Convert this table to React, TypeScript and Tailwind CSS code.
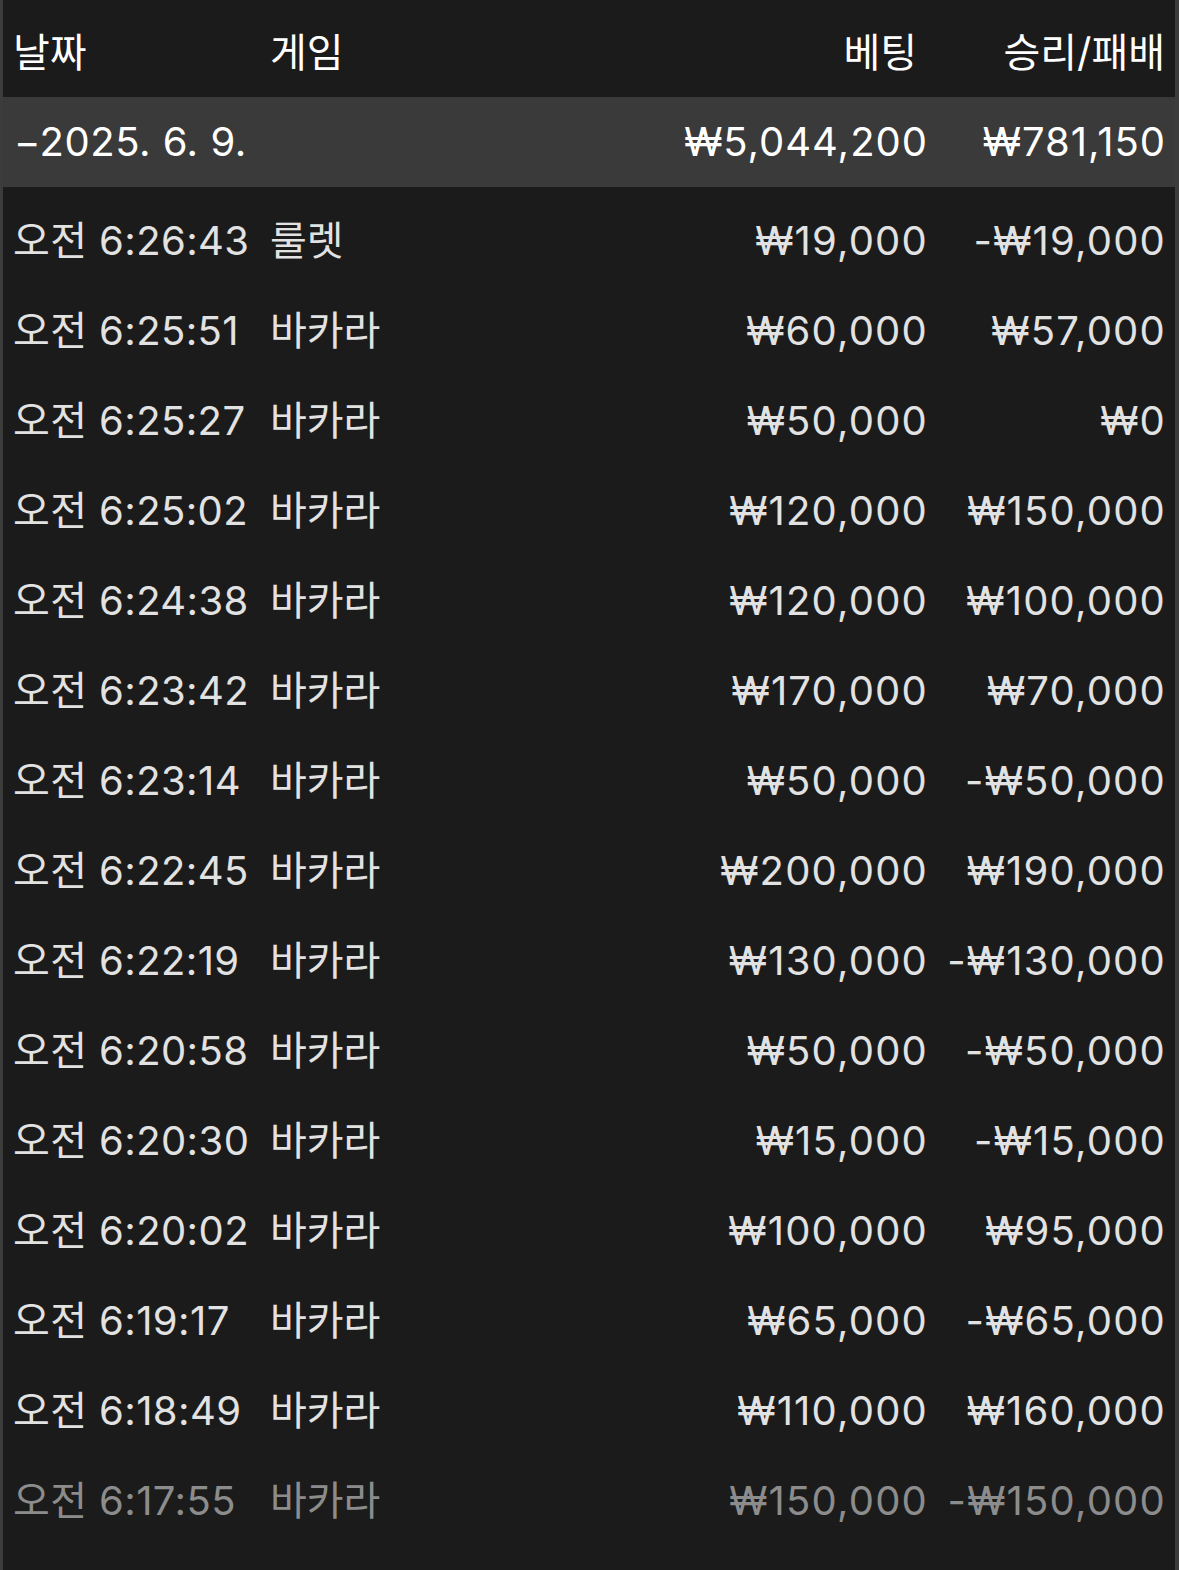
import React from "react";

const rows: [string, string, string, string][] = [
  ["오전 6:26:43", "룰렛", "₩19,000", "-₩19,000"],
  ["오전 6:25:51", "바카라", "₩60,000", "₩57,000"],
  ["오전 6:25:27", "바카라", "₩50,000", "₩0"],
  ["오전 6:25:02", "바카라", "₩120,000", "₩150,000"],
  ["오전 6:24:38", "바카라", "₩120,000", "₩100,000"],
  ["오전 6:23:42", "바카라", "₩170,000", "₩70,000"],
  ["오전 6:23:14", "바카라", "₩50,000", "-₩50,000"],
  ["오전 6:22:45", "바카라", "₩200,000", "₩190,000"],
  ["오전 6:22:19", "바카라", "₩130,000", "-₩130,000"],
  ["오전 6:20:58", "바카라", "₩50,000", "-₩50,000"],
  ["오전 6:20:30", "바카라", "₩15,000", "-₩15,000"],
  ["오전 6:20:02", "바카라", "₩100,000", "₩95,000"],
  ["오전 6:19:17", "바카라", "₩65,000", "-₩65,000"],
  ["오전 6:18:49", "바카라", "₩110,000", "₩160,000"],
  ["오전 6:17:55", "바카라", "₩150,000", "-₩150,000"],
];

export default function App() {
  return (
    <div
      className="min-h-[1570px] bg-[#1b1b1b] border-l-[3px] border-r-[4px] border-[#3c3c3c] text-[40px] leading-none"
      style={{ fontFamily: '"Inter", "Noto Sans CJK KR", sans-serif' }}
    >
      <div className="flex h-[97px] items-center pt-[8px] pl-[10px] pr-[10px] text-white">
        <div className="w-[257px]">날짜</div>
        <div className="flex-1">게임</div>
        <div className="text-right">베팅</div>
        <div className="w-[248px] text-right">승리/패배</div>
      </div>
      <div className="flex h-[90px] items-center bg-[#3a3a3a] pl-[11px] pr-[9px] text-white tracking-[1px]">
        <div className="flex-1 tracking-[0.5px]">−2025. 6. 9.</div>
        <div className="text-right">₩5,044,200</div>
        <div className="w-[238px] text-right">₩781,150</div>
      </div>
      <div className="pt-[9px]">
        {rows.map((r, i) => (
          <div
            key={i}
            className={`flex h-[90px] items-center pl-[10px] pr-[9px] ${
              i === rows.length - 1 ? "text-[#8c8c8c]" : "text-[#e2e2e2]"
            }`}
          >
            <div className="w-[257px] whitespace-nowrap tracking-[0.4px]">{r[0]}</div>
            <div className="flex-1">{r[1]}</div>
            <div className="text-right whitespace-nowrap tracking-[1.2px]">{r[2]}</div>
            <div className="w-[238px] text-right whitespace-nowrap tracking-[1.2px]">{r[3]}</div>
          </div>
        ))}
      </div>
    </div>
  );
}
